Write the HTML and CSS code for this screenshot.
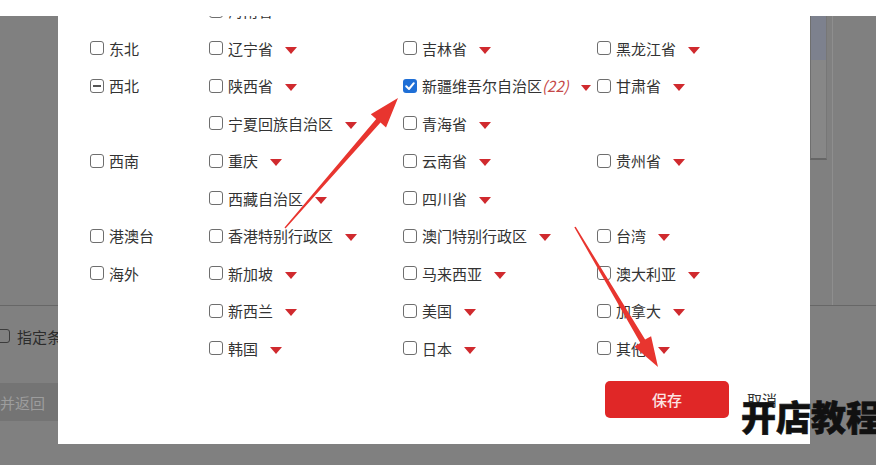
FILE: index.html
```html
<!DOCTYPE html>
<html lang="zh-CN">
<head>
    <meta charset="UTF-8">
    <title>选择配送区域</title>
    <link rel="stylesheet" href="styles.css">
</head>
<body>

    <div class="topbar"></div>

    <div class="stage">
        <!-- page behind the dialog, dimmed -->
        <div class="behind">
            <div class="behind-top">
                <div class="side-panel">
                    <div class="side-track"></div>
                    <div class="side-edge"></div>
                </div>
            </div>
            <div class="behind-rule"></div>
            <div class="behind-option">
                <span class="box box-dim"></span>
                <span>指定条件包邮</span>
            </div>
            <div class="behind-save">保存并返回</div>
        </div>

        <!-- region dialog -->
        <div class="dialog">
            <div class="region-grid">
                <div></div>
                <div class="item"><span class="box"></span>海南省<i class="caret"></i></div>
                <div></div>
                <div></div>

                <div class="item"><span class="box"></span>东北</div>
                <div class="item"><span class="box"></span>辽宁省<i class="caret"></i></div>
                <div class="item"><span class="box"></span>吉林省<i class="caret"></i></div>
                <div class="item"><span class="box"></span>黑龙江省<i class="caret"></i></div>

                <div class="item"><span class="box box-partial"></span>西北</div>
                <div class="item"><span class="box"></span>陕西省<i class="caret"></i></div>
                <div class="item">
                    <span class="box box-checked">
                        <svg viewBox="0 0 14 14" width="14" height="14"><path d="M3.2 7.2 L6 10 L10.8 4.2" fill="none" stroke="#fff" stroke-width="2" stroke-linecap="round" stroke-linejoin="round"/></svg>
                    </span>新疆维吾尔自治区<em class="count">(22)</em><i class="caret caret-tight"></i>
                </div>
                <div class="item"><span class="box"></span>甘肃省<i class="caret"></i></div>

                <div></div>
                <div class="item"><span class="box"></span>宁夏回族自治区<i class="caret"></i></div>
                <div class="item"><span class="box"></span>青海省<i class="caret"></i></div>
                <div></div>

                <div class="item"><span class="box"></span>西南</div>
                <div class="item"><span class="box"></span>重庆<i class="caret"></i></div>
                <div class="item"><span class="box"></span>云南省<i class="caret"></i></div>
                <div class="item"><span class="box"></span>贵州省<i class="caret"></i></div>

                <div></div>
                <div class="item"><span class="box"></span>西藏自治区<i class="caret"></i></div>
                <div class="item"><span class="box"></span>四川省<i class="caret"></i></div>
                <div></div>

                <div class="item"><span class="box"></span>港澳台</div>
                <div class="item"><span class="box"></span>香港特别行政区<i class="caret"></i></div>
                <div class="item"><span class="box"></span>澳门特别行政区<i class="caret"></i></div>
                <div class="item"><span class="box"></span>台湾<i class="caret"></i></div>

                <div class="item"><span class="box"></span>海外</div>
                <div class="item"><span class="box"></span>新加坡<i class="caret"></i></div>
                <div class="item"><span class="box"></span>马来西亚<i class="caret"></i></div>
                <div class="item"><span class="box"></span>澳大利亚<i class="caret"></i></div>

                <div></div>
                <div class="item"><span class="box"></span>新西兰<i class="caret"></i></div>
                <div class="item"><span class="box"></span>美国<i class="caret"></i></div>
                <div class="item"><span class="box"></span>加拿大<i class="caret"></i></div>

                <div></div>
                <div class="item"><span class="box"></span>韩国<i class="caret"></i></div>
                <div class="item"><span class="box"></span>日本<i class="caret"></i></div>
                <div class="item"><span class="box"></span>其他<i class="caret"></i></div>
            </div>

            <div class="dialog-footer">
                <button class="btn-save">保存</button>
                <span class="btn-cancel">取消</span>
            </div>
        </div>
    </div>

    <!-- annotation arrows -->
    <svg class="arrows" width="876" height="465" viewBox="0 0 876 465">
        <polygon points="285.5,228.6 380.5,122.6 386,127.4 398,98 370.8,114.2 376.2,118.9 284.5,227.4" fill="#e8352f"/>
        <polygon points="574.3,227.3 640.4,342.9 634.3,346.4 658,367 651.1,336.2 645.1,339.6 575.7,226.7" fill="#e8352f"/>
    </svg>

    <div class="watermark">开店教程</div>

</body>
</html>
```

FILE: styles.css
```css
* {
    box-sizing: border-box;
}

body {
    margin: 0;
    width: 876px;
    height: 465px;
    overflow: hidden;
    position: relative;
    background: #808080;
    font-family: "Noto Sans CJK SC", "Noto Sans", sans-serif;
    font-size: 15px;
    color: #333;
}

.topbar {
    height: 16px;
    background: #fff;
}

.stage {
    position: relative;
    height: 449px;
}

/* dimmed page behind */
.behind {
    display: flex;
    flex-direction: column;
    height: 100%;
}

.behind-top {
    height: 289px;
    display: flex;
    justify-content: flex-end;
}

.side-panel {
    width: 66px;
    display: flex;
}

.side-track {
    width: 17px;
    height: 144px;
    background: linear-gradient(#7d818e 0 44px, #878787 44px);
    border-left: 1px solid #6f6f6f;
    border-right: 1px solid #777;
    border-bottom: 2px solid #666;
}

.side-edge {
    width: 6px;
    border-right: 1px solid #8e8e8e;
}

.behind-rule {
    border-top: 1px solid #676767;
}

.behind-option {
    display: flex;
    align-items: center;
    gap: 2px;
    margin-top: 20px;
    margin-left: -4px;
    height: 20px;
    color: #2c2c2c;
}

.box-dim {
    border-color: #3c3c3c !important;
    background: transparent !important;
}

.behind-save {
    margin-top: 37px;
    margin-left: -40px;
    width: 110px;
    height: 38px;
    padding-left: 10px;
    display: flex;
    align-items: center;
    background: #747474;
    color: #9d9d9d;
}

/* dialog */
.dialog {
    position: absolute;
    top: 0;
    left: 58px;
    width: 752px;
    height: 428px;
    background: #fff;
    overflow: hidden;
}

.region-grid {
    display: grid;
    grid-template-columns: 119px 194px 194px 1fr;
    grid-auto-rows: 37.5px;
    padding-left: 32px;
    margin-top: -24.25px;
}

.item {
    display: flex;
    align-items: center;
    white-space: nowrap;
}

.box {
    width: 14px;
    height: 14px;
    flex: none;
    margin-right: 5px;
    border: 1px solid #6e6e6e;
    border-radius: 3px;
    background: #fff;
    position: relative;
}

.box-partial::after {
    content: "";
    position: absolute;
    left: 2px;
    right: 2px;
    top: 5px;
    height: 2px;
    background: #555;
}

.box-checked {
    border: none;
    background: #1f6fd6;
}

.box-checked svg {
    display: block;
}

.count {
    color: #c54848;
    font-style: italic;
}

.caret {
    width: 0;
    height: 0;
    margin-left: 12px;
    margin-top: 4px;
    border-left: 6.5px solid transparent;
    border-right: 6.5px solid transparent;
    border-top: 7px solid #d02a2e;
}

.caret-tight {
    border-left-width: 5.5px;
    border-right-width: 5.5px;
    border-top-width: 6px;
}

.dialog-footer {
    display: flex;
    justify-content: flex-end;
    align-items: center;
    gap: 18px;
    padding-right: 33px;
    margin-top: 14.25px;
}

.btn-save {
    width: 124px;
    height: 37px;
    border: none;
    border-radius: 5px;
    background: #e02727;
    color: #fbe3e3;
    font-family: inherit;
    font-size: 15px;
    font-weight: 500;
}

.btn-cancel {
    color: #333;
}

/* overlays */
.arrows {
    position: absolute;
    top: 0;
    left: 0;
    pointer-events: none;
}

.watermark {
    position: absolute;
    left: 741px;
    top: 395px;
    font-size: 35px;
    line-height: 42px;
    font-weight: 900;
    color: #111;
    -webkit-text-stroke: 0.6px #111;
    white-space: nowrap;
}
```
